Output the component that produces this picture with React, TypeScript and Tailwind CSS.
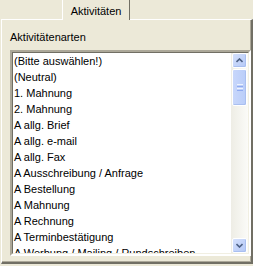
import React from "react";

const ITEMS = [
  "(Bitte auswählen!)",
  "(Neutral)",
  "1. Mahnung",
  "2. Mahnung",
  "A allg. Brief",
  "A allg. e-mail",
  "A allg. Fax",
  "A Ausschreibung / Anfrage",
  "A Bestellung",
  "A Mahnung",
  "A Rechnung",
  "A Terminbestätigung",
  "A Werbung / Mailing / Rundschreiben",
];

const ScrollButton = ({ dir }: { dir: "up" | "down" }) => (
  <div className="h-[15px] w-[15px] rounded-[2px] border border-white bg-gradient-to-br from-[#d4e0fc] to-[#b4c8f6] flex items-center justify-center shadow-[inset_-1px_-1px_0_#a9bff0]">
    <svg width="7" height="5" viewBox="0 0 7 5">
      {dir === "up" ? (
        <path d="M0.5 4 L3.5 1 L6.5 4" fill="none" stroke="#4d6185" strokeWidth="1.6" />
      ) : (
        <path d="M0.5 1 L3.5 4 L6.5 1" fill="none" stroke="#4d6185" strokeWidth="1.6" />
      )}
    </svg>
  </div>
);

export default function App() {
  return (
    <div
      className="w-[253px] h-[266px] bg-[#ece9d8] text-[11px] text-black overflow-hidden"
      style={{ fontFamily: "Tahoma, 'Liberation Sans', Arial, sans-serif" }}
    >
      {/* tab strip */}
      <div className="h-[19px] flex items-end pl-[62px]">
        <div className="relative z-10 -mb-px h-[20px] w-[68px] bg-[#ece9d8] border-l border-white border-r border-r-[#716f64] flex items-start justify-center pt-[3px]">
          Aktivitäten
        </div>
      </div>

      {/* tab page */}
      <div className="ml-px w-[252px] h-[245px] border-t border-l border-white border-r-2 border-b-2 border-r-[#716f64] border-b-[#716f64] shadow-[inset_-1px_-1px_0_#aca899] pl-[8px] pt-[10px]">
        <div className="h-[20px] leading-[14px]">Aktivitätenarten</div>

        {/* list box */}
        <div className="w-[241px] h-[206px] border-2 border-t-[#aca899] border-l-[#aca899] border-r-white border-b-white">
          <div className="h-full border border-t-[#716f64] border-l-[#716f64] border-r-[#f1efe2] border-b-[#f1efe2] bg-white flex overflow-hidden">
            <div className="flex-1 overflow-hidden">
              {ITEMS.map((item) => (
                <div key={item} className="h-[16px] leading-[16px] pl-px whitespace-nowrap">
                  {item}
                </div>
              ))}
            </div>

            {/* scrollbar */}
            <div className="w-[17px] h-full bg-gradient-to-r from-[#eeede5] to-[#fbfbf8] flex flex-col items-center">
              <ScrollButton dir="up" />
              <div className="mt-px h-[37px] w-[15px] rounded-[2px] border border-white bg-gradient-to-r from-[#c8d7fb] to-[#b9cdf9] flex flex-col items-center justify-center gap-px shadow-[inset_-1px_-1px_0_#a9bff0]">
                <div className="h-px w-[6px] bg-[#eef3fe]" />
                <div className="h-px w-[6px] bg-[#8faaf0]" />
                <div className="h-px w-[6px] bg-[#eef3fe]" />
                <div className="h-px w-[6px] bg-[#8faaf0]" />
              </div>
              <div className="flex-1" />
              <ScrollButton dir="down" />
            </div>
          </div>
        </div>
      </div>
    </div>
  );
}
